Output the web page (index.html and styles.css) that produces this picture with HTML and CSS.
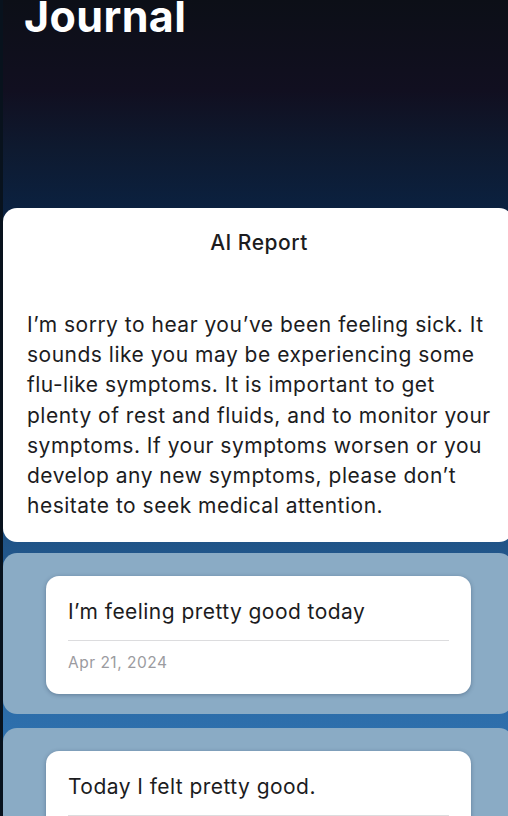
FILE: index.html
```html
<!DOCTYPE html>
<html>
<head>
<meta charset="utf-8">
<link rel="stylesheet" href="styles.css">
</head>
<body>
<div class="screen">
  <h1 class="title">Journal</h1>
  <section class="report">
    <h2 class="report-title">AI Report</h2>
    <p class="report-body">I’m sorry to hear you’ve been feeling sick. It sounds like you may be experiencing some flu-like symptoms. It is important to get plenty of rest and fluids, and to monitor your symptoms. If your symptoms worsen or you develop any new symptoms, please don’t hesitate to seek medical attention.</p>
  </section>
  <div class="entries">
    <div class="panel">
      <div class="entry">
        <div class="entry-text">I’m feeling pretty good today</div>
        <div class="divider"></div>
        <div class="entry-date">Apr 21, 2024</div>
      </div>
    </div>
    <div class="panel">
      <div class="entry">
        <div class="entry-text">Today I felt pretty good.</div>
        <div class="divider"></div>
        <div class="entry-date">Apr 20, 2024</div>
      </div>
    </div>
  </div>
</div>
</body>
</html>
```
FILE: styles.css
```css
* { box-sizing: border-box; }
html, body { margin: 0; padding: 0; }
body {
  width: 508px;
  height: 816px;
  overflow: hidden;
  background: #08121d;
  font-family: Inter, "Noto Sans", sans-serif;
  color: #1c1c1e;
}
.screen {
  margin-left: 3px;
  width: 505px;
  height: 816px;
  overflow: hidden;
  background: linear-gradient(180deg, #0c0f17 0px, #110f20 90px, #0e1a30 150px, #0b2140 210px, #1a4877 480px, #22578c 560px, #2d6eab 720px, #3477b5 816px);
}
.title {
  margin: -5px 0 0 0;
  padding-left: 21px;
  height: 213px;
  font-size: 43px;
  font-weight: 700;
  line-height: 42px;
  color: #ffffff;
  letter-spacing: 0.4px;
}
.report {
  background: #ffffff;
  border-radius: 14px;
  width: 510px;
  height: 334px;
  padding: 20px 10px 0 24px;
}
.report-title {
  margin: 0;
  text-align: center;
  font-size: 21px;
  font-weight: 500;
  line-height: 30px;
  letter-spacing: 0.5px;
  padding-right: 12px;
}
.report-body {
  margin: 52px 0 0 0;
  font-size: 21px;
  line-height: 30.2px;
  letter-spacing: 0.5px;
  width: 476px;
}
.entries {
  display: flex;
  flex-direction: column;
  gap: 14px;
  margin-top: 11px;
}
.panel {
  background: #8aabc5;
  border-radius: 14px;
  width: 510px;
  height: 161px;
  padding: 23px 0 0 43px;
}
.entry {
  background: #ffffff;
  border-radius: 13px;
  width: 425px;
  height: 118px;
  padding: 22px 22px 0 22px;
  box-shadow: 0 1px 4px rgba(20, 40, 70, 0.35);
}
.entry-text {
  font-size: 21px;
  line-height: 28px;
  letter-spacing: 0.45px;
}
.divider {
  height: 1px;
  background: #dcdcde;
  margin-top: 14px;
}
.entry-date {
  margin-top: 12px;
  font-size: 15.5px;
  line-height: 20px;
  letter-spacing: 0.5px;
  color: #9b9ba0;
}
```
